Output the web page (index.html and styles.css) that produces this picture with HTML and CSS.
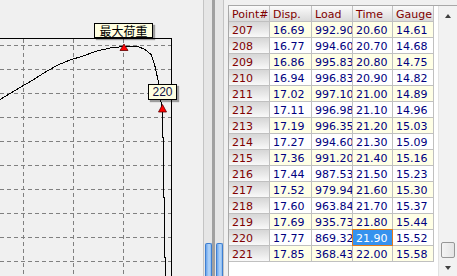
FILE: index.html
```html
<!DOCTYPE html>
<html>
    <head>
        <title>Load curve</title>
        <meta charset="UTF-8">
        <link rel="stylesheet" href="styles.css">
    </head>
    <body>
        <div class="app">
            <div class="chart">
                <svg class="plot" width="203" height="276" viewBox="0 0 203 276">
                    <g class="grid-lines" stroke="#808080" stroke-width="1" stroke-dasharray="4 3" shape-rendering="crispEdges">
                        <line x1="23.5" y1="39" x2="23.5" y2="276" />
                        <line x1="73.5" y1="39" x2="73.5" y2="276" />
                        <line x1="123.5" y1="39" x2="123.5" y2="276" />
                        <line x1="0" y1="45.5" x2="171" y2="45.5" />
                        <line x1="0" y1="69.5" x2="171" y2="69.5" />
                        <line x1="0" y1="93.5" x2="171" y2="93.5" />
                        <line x1="0" y1="117.5" x2="171" y2="117.5" />
                        <line x1="0" y1="141.5" x2="171" y2="141.5" />
                        <line x1="0" y1="165.5" x2="171" y2="165.5" />
                        <line x1="0" y1="189.5" x2="171" y2="189.5" />
                        <line x1="0" y1="213.5" x2="171" y2="213.5" />
                        <line x1="0" y1="237.5" x2="171" y2="237.5" />
                        <line x1="0" y1="261.5" x2="171" y2="261.5" />
                    </g>
                    <path d="M0 38.5 H171.5 V276" fill="none" stroke="#000" shape-rendering="crispEdges" />
                    <polyline fill="none" stroke="#000" stroke-width="1" shape-rendering="crispEdges"
                        points="0,99.5 10,93.5 20,87.5 33,80 47,71 58,65 70,60 83,56 97,51 110,48 123,46.5 138,46.5 145,49.5 151.5,55 155,66.5 158,80 160,93 161.5,106 162.5,118 162.5,137 163.5,138 163.5,197 164.5,198 164.5,257 165.5,258 165.5,276" />
                    <polygon points="120,50.5 128,50.5 124,44" fill="#ff0000" stroke="#600000" stroke-width="0.8" />
                    <polygon points="158.5,112 166.5,112 162.5,104.5" fill="#ff0000" stroke="#600000" stroke-width="0.8" />
                </svg>
                <div class="tip tip-max">最大荷重</div>
                <div class="tip tip-point">220</div>
            </div>

            <div class="splitter">
                <div class="track track-left"><div class="fill"></div></div>
                <div class="divider"></div>
                <div class="track track-right"><div class="fill"></div></div>
            </div>

            <div class="panel">
                <div class="grid-view">
                    <div class="grid">
                        <div class="row">
                            <div class="hd">Point#</div><div class="hd">Disp.</div><div class="hd">Load</div><div class="hd">Time</div><div class="hd">Gauge</div>
                        </div>
                        <div class="row alt"><div class="fix">207</div><div class="cell">16.69</div><div class="cell">992.90</div><div class="cell">20.60</div><div class="cell">14.61</div></div>
                        <div class="row"><div class="fix">208</div><div class="cell">16.77</div><div class="cell">994.60</div><div class="cell">20.70</div><div class="cell">14.68</div></div>
                        <div class="row alt"><div class="fix">209</div><div class="cell">16.86</div><div class="cell">995.83</div><div class="cell">20.80</div><div class="cell">14.75</div></div>
                        <div class="row"><div class="fix">210</div><div class="cell">16.94</div><div class="cell">996.83</div><div class="cell">20.90</div><div class="cell">14.82</div></div>
                        <div class="row alt"><div class="fix">211</div><div class="cell">17.02</div><div class="cell">997.10</div><div class="cell">21.00</div><div class="cell">14.89</div></div>
                        <div class="row"><div class="fix">212</div><div class="cell">17.11</div><div class="cell">996.98</div><div class="cell">21.10</div><div class="cell">14.96</div></div>
                        <div class="row alt"><div class="fix">213</div><div class="cell">17.19</div><div class="cell">996.35</div><div class="cell">21.20</div><div class="cell">15.03</div></div>
                        <div class="row"><div class="fix">214</div><div class="cell">17.27</div><div class="cell">994.60</div><div class="cell">21.30</div><div class="cell">15.09</div></div>
                        <div class="row alt"><div class="fix">215</div><div class="cell">17.36</div><div class="cell">991.20</div><div class="cell">21.40</div><div class="cell">15.16</div></div>
                        <div class="row"><div class="fix">216</div><div class="cell">17.44</div><div class="cell">987.53</div><div class="cell">21.50</div><div class="cell">15.23</div></div>
                        <div class="row alt"><div class="fix">217</div><div class="cell">17.52</div><div class="cell">979.94</div><div class="cell">21.60</div><div class="cell">15.30</div></div>
                        <div class="row"><div class="fix">218</div><div class="cell">17.60</div><div class="cell">963.84</div><div class="cell">21.70</div><div class="cell">15.37</div></div>
                        <div class="row alt"><div class="fix">219</div><div class="cell">17.69</div><div class="cell">935.73</div><div class="cell">21.80</div><div class="cell">15.44</div></div>
                        <div class="row"><div class="fix">220</div><div class="cell">17.77</div><div class="cell">869.32</div><div class="cell sel">21.90</div><div class="cell">15.52</div></div>
                        <div class="row alt"><div class="fix">221</div><div class="cell">17.85</div><div class="cell">368.43</div><div class="cell">22.00</div><div class="cell">15.58</div></div>
                    </div>

                    <div class="vscroll">
                        <div class="sb-btn"><span class="arrow-up"></span></div>
                        <div class="sb-track"><div class="thumb"></div></div>
                        <div class="sb-btn"><span class="arrow-down"></span></div>
                    </div>
                </div>
            </div>
        </div>
    </body>
</html>
```

FILE: styles.css
```css
html, body {
    margin: 0;
    padding: 0;
    background-color: #f0f0f0;
    overflow: hidden;
}

.app {
    display: flex;
    width: 457px;
    height: 276px;
}

/* chart */

.chart {
    position: relative;
    width: 203px;
    height: 276px;
    flex: none;
}

.plot {
    display: block;
}

.tip {
    position: absolute;
    box-sizing: border-box;
    border: 1px solid #000;
    background-color: #ffffe1;
    color: #000;
    text-align: center;
    box-shadow: 2px 2px 1px rgba(0, 0, 0, 0.35);
}

.tip-max {
    left: 94px;
    top: 23px;
    width: 59px;
    height: 15px;
    font: 12px/13px "Noto Sans CJK JP", sans-serif;
}

.tip-point {
    left: 148px;
    top: 84px;
    width: 29px;
    height: 16px;
    font: 12px/14px "Liberation Sans", sans-serif;
    color: #101040;
}

/* splitter between chart and grid */

.splitter {
    display: flex;
    width: 25px;
    flex: none;
}

.track {
    width: 8px;
    background-color: #e6e6e6;
    display: flex;
    flex-direction: column;
    justify-content: flex-end;
}

.track-left {
    border-left: 1px solid #c4c4c4;
}

.track-right {
    border-right: 1px solid #c4c4c4;
    margin-right: 4px;
}

.divider {
    width: 3px;
    background-color: #a0a0a0;
}

.fill {
    box-sizing: border-box;
    height: 33px;
    margin: 0 0 0 1px;
    width: 7px;
    border: 1px solid #3f7fd0;
    border-bottom: none;
    border-radius: 2px 2px 0 0;
    background: linear-gradient(to right, #6aa4ec, #b6d6f8 60%, #8abbf2);
}

/* grid panel */

.panel {
    flex: 1;
    padding-top: 5px;
}

.grid-view {
    display: flex;
    height: 271px;
    box-sizing: border-box;
    border-top: 1px solid #a8a8a8;
    border-left: 1px solid #a8a8a8;
    background-color: #fff;
}

.grid {
    display: grid;
    grid-template-columns: 40px 41px 40px 39px 40px;
    grid-auto-rows: 15px;
    gap: 1px;
    padding: 0 1px 1px 0;
    background-color: #c0c0c0;
    align-self: flex-start;
    font: 11px/12px "DejaVu Sans", sans-serif;
}

.row {
    display: contents;
}

.hd, .fix, .cell {
    padding: 3px 0 0 3px;
    overflow: hidden;
    white-space: nowrap;
}

.hd {
    color: #800000;
    background: linear-gradient(#fbfbfb, #dadada);
}

.fix {
    color: #800000;
    background: linear-gradient(#d6d6d6, #f9f9f9);
}

.cell {
    color: #000080;
    background-color: #fff;
}

.row.alt .cell {
    background-color: #ffffe6;
}

.row .cell.sel {
    color: #fff;
    background-color: #3592ee;
    outline: 1px solid #e07a1c;
}

/* vertical scrollbar */

.vscroll {
    margin-left: auto;
    width: 19px;
    display: flex;
    flex-direction: column;
    background-color: #f2f2f2;
    border-left: 1px solid #e2e2e2;
    box-sizing: border-box;
}

.sb-btn {
    height: 17px;
    display: flex;
    align-items: center;
    justify-content: center;
}

.arrow-up {
    width: 0;
    height: 0;
    border-left: 3px solid transparent;
    border-right: 3px solid transparent;
    border-bottom: 4px solid #404040;
    margin-top: 3px;
}

.arrow-down {
    width: 0;
    height: 0;
    border-left: 3px solid transparent;
    border-right: 3px solid transparent;
    border-top: 4px solid #404040;
}

.sb-track {
    flex: 1;
    display: flex;
    flex-direction: column;
    justify-content: flex-end;
    align-items: center;
}

.thumb {
    box-sizing: border-box;
    width: 14px;
    height: 16px;
    margin: 0 0 1px 0;
    border: 1px solid #979797;
    border-radius: 2px;
    background: linear-gradient(to right, #f4f4f4, #e4e4e4);
}
```
